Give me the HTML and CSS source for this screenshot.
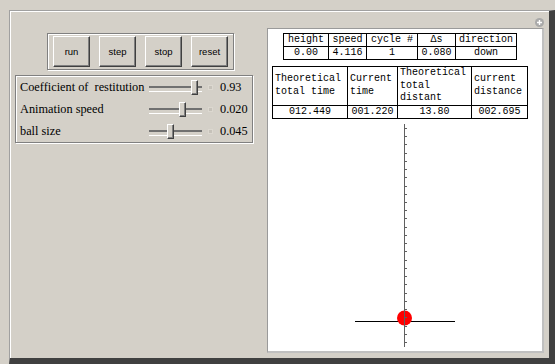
FILE: index.html
```html
<!DOCTYPE html>
<html lang="en">
<head>
    <meta charset="UTF-8">
    <title>Bouncing Ball</title>
    <link rel="stylesheet" href="styles.css">
</head>
<body>
    <div class="applet">
        <div class="controls">
            <div class="buttons">
                <button class="btn">run</button>
                <button class="btn">step</button>
                <button class="btn">stop</button>
                <button class="btn">reset</button>
            </div>

            <div class="sliders">
                <div class="slider-row">
                    <span class="label">Coefficient of&nbsp; restitution</span>
                    <div class="slider"><div class="thumb" style="left: 42px"></div></div>
                    <span class="tick-box"></span>
                    <span class="value">0.93</span>
                </div>
                <div class="slider-row">
                    <span class="label">Animation speed</span>
                    <div class="slider"><div class="thumb" style="left: 30px"></div></div>
                    <span class="tick-box"></span>
                    <span class="value">0.020</span>
                </div>
                <div class="slider-row">
                    <span class="label">ball size</span>
                    <div class="slider"><div class="thumb" style="left: 18px"></div></div>
                    <span class="tick-box"></span>
                    <span class="value">0.045</span>
                </div>
            </div>
        </div>

        <div class="display">
            <table class="stats">
                <colgroup>
                    <col style="width: 45px"><col style="width: 38px"><col style="width: 51px"><col style="width: 38px"><col style="width: 61px">
                </colgroup>
                <tr><td>height</td><td>speed</td><td>cycle #</td><td>&Delta;s</td><td>direction</td></tr>
                <tr><td>0.00</td><td>4.116</td><td>1</td><td>0.080</td><td>down</td></tr>
            </table>

            <table class="summary">
                <colgroup>
                    <col style="width: 75px"><col style="width: 50px"><col style="width: 74px"><col style="width: 56px">
                </colgroup>
                <tr class="head">
                    <td>Theoretical total time</td>
                    <td>Current time</td>
                    <td>Theoretical total distant</td>
                    <td>current distance</td>
                </tr>
                <tr class="vals">
                    <td>012.449</td><td>001.220</td><td>13.80</td><td>002.695</td>
                </tr>
            </table>

            <svg class="scene" width="274" height="232" viewBox="0 0 274 232">
                <line x1="87" y1="202.5" x2="187" y2="202.5" stroke="#000" stroke-width="1.2"/>
                <circle cx="136.5" cy="199" r="7.5" fill="#ff0000"/>
                <line x1="136.5" y1="5" x2="136.5" y2="228" stroke="#606060" stroke-width="1"/>
                <path stroke="#606060" stroke-width="1" fill="none"
                      d="M136 9.5h3M136 17.5h3M136 25.5h3M136 34.5h3M136 42.5h3M136 50.5h3M136 58.5h3M136 67.5h3M136 75.5h3
                         M136 83.5h3M136 91.5h3M136 99.5h3M136 108.5h3M136 116.5h3M136 124.5h3M136 132.5h3M136 141.5h3M136 149.5h3
                         M136 157.5h3M136 165.5h3M136 174.5h3M136 182.5h3M136 190.5h3M136 198.5h3M136 207.5h3M136 215.5h3M136 223.5h3"/>
            </svg>
        </div>

        <svg class="expand" width="9" height="9" viewBox="0 0 9 9">
            <circle cx="4.5" cy="4.5" r="4.5" fill="#a9a9a9"/>
            <path d="M4.5 2v5M2 4.5h5" stroke="#fff" stroke-width="1.4"/>
        </svg>
    </div>
</body>
</html>
```

FILE: styles.css
```css
* {
    box-sizing: border-box;
}

body {
    margin: 0;
    background-color: #d4d0c8;
    font-family: "Liberation Serif", "Times New Roman", serif;
    color: #000;
}

.applet {
    position: relative;
    display: flex;
    margin: 10px 0 0 9px;
    width: 546px;
    height: 354px;
    border-top: 1px solid #a0a0a0;
    border-left: 1px solid #a0a0a0;
    border-right: 6px solid #404040;
    border-bottom: 6px solid #404040;
    box-shadow: inset 1px 1px 0 #fff;
}

/* left side: buttons and sliders */
.controls {
    width: 257px;
    padding: 22px 0 0 5px;
}

.buttons {
    display: flex;
    gap: 9px;
    width: 187px;
    margin-left: 32px;
    padding: 2px 5px;
    border: 1px solid #808080;
    box-shadow: inset 1px 1px 0 #fff, 1px 1px 0 #fff;
}

.btn {
    width: 37px;
    height: 31px;
    padding: 0;
    background-color: #d4d0c8;
    border: 1px solid;
    border-color: #fff #404040 #404040 #fff;
    box-shadow: inset -1px -1px 0 #808080;
    font-family: "Liberation Sans", Arial, sans-serif;
    font-size: 9.5px;
    color: #000;
}

.sliders {
    width: 238px;
    margin-top: 5px;
    border: 1px solid #808080;
    box-shadow: inset 1px 1px 0 #fff, 1px 1px 0 #fff;
}

.slider-row {
    display: flex;
    align-items: center;
    height: 22px;
    padding-left: 4px;
    font-size: 12.3px;
}

.label {
    width: 129px;
    white-space: nowrap;
}

.slider {
    position: relative;
    width: 53px;
    height: 15px;
}

.slider::before {
    content: '';
    position: absolute;
    left: 0;
    right: 0;
    top: 6px;
    height: 3px;
    border-top: 2px solid #707070;
    border-bottom: 1px solid #fff;
}

.thumb {
    position: absolute;
    top: 0;
    width: 7px;
    height: 15px;
    background-color: #d4d0c8;
    border: 1px solid;
    border-color: #fff #404040 #404040 #fff;
    box-shadow: inset -1px -1px 0 #808080;
}

.tick-box {
    width: 5px;
    height: 5px;
    margin: 0 7px 0 6px;
    background-color: #c6c2ba;
    border: 1px solid #dcd8d0;
}

/* right side: the drawing */
.display {
    display: flex;
    flex-direction: column;
    width: 277px;
    height: 325px;
    margin-top: 17px;
    background-color: #fff;
    border-style: solid;
    border-width: 1px 2px 2px 1px;
    border-color: #9a9a9a #c0c0c0 #c0c0c0 #9a9a9a;
}

.stats,
.summary {
    border-collapse: collapse;
    table-layout: fixed;
    font-family: "Liberation Mono", "Courier New", monospace;
    font-size: 10px;
}

.stats td,
.summary td {
    border: 1px solid #000;
    padding: 0;
}

.stats {
    width: 233px;
    margin: 4px 0 0 15px;
    line-height: 12px;
    text-align: center;
}

.summary {
    width: 255px;
    margin: 6px 0 0 4px;
    line-height: 12.5px;
}

.summary .head td {
    padding-left: 2px;
    text-align: left;
    vertical-align: middle;
}

.summary .vals td {
    text-align: center;
}

.scene {
    display: block;
    margin-top: auto;
}

.expand {
    position: absolute;
    top: 7px;
    right: 5px;
}
```
